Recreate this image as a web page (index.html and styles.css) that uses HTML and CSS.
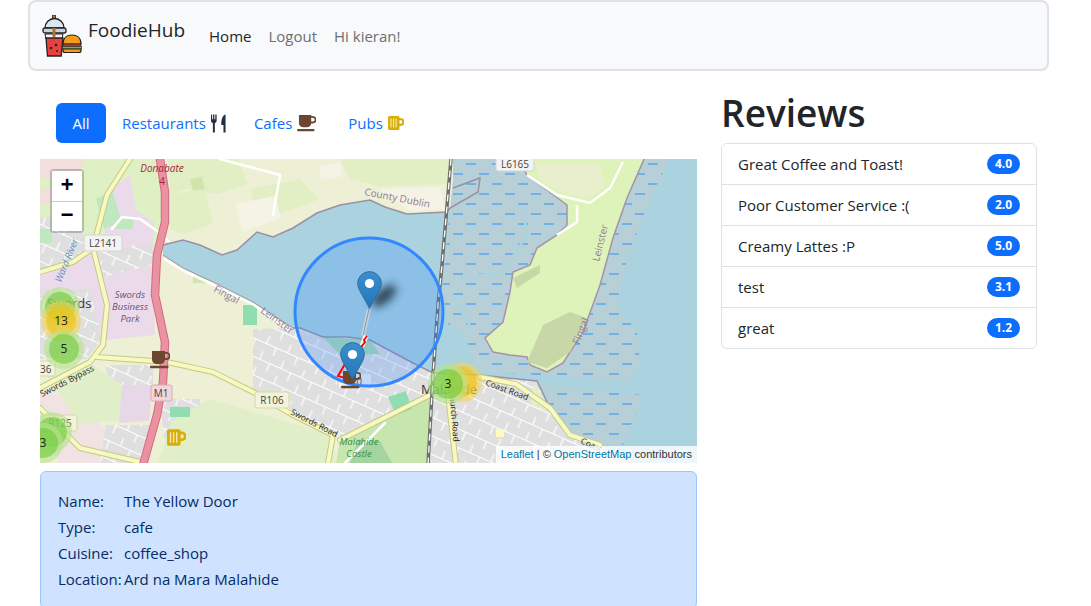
FILE: index.html
```html
<!DOCTYPE html>
<html lang="en">
<head>
    <meta charset="UTF-8">
    <meta name="viewport" content="width=device-width, initial-scale=1.0">
    <title>FoodieHub</title>
    <link rel="stylesheet" href="styles.css">
</head>
<body>
    <!-- shared icons -->
    <svg class="svg-defs" aria-hidden="true">
        <defs>
            <symbol id="icon-coffee" viewBox="0 0 20 18">
                <path fill="#6b4630" fill-rule="evenodd" d="M2 0h13v1h1.5a4 4 0 0 1 0 8H15a5 5 0 0 1-5 4H7a5 5 0 0 1-5-4zM15 2.8V7h1.5a2.1 2.1 0 0 0 0-4.2z"/>
                <rect fill="#6b4630" y="14.8" width="18.5" height="2.4" rx="1"/>
            </symbol>
            <symbol id="icon-beer" viewBox="0 0 16 16">
                <path fill="#d9ae0b" fill-rule="evenodd" d="M1.5 1H10a1.500 1.500 0 0 1 1.500 1.500V3h1a3.500 3.500 0 0 1 0 8h-1v2.500A1.500 1.500 0 0 1 10 15H1.500A1.500 1.500 0 0 1 0 13.500V2.500A1.500 1.500 0 0 1 1.500 1zM11.500 5.200v3.600h1a1.800 1.800 0 0 0 0-3.600z"/>
                <path fill="#f7ecb8" d="M2.400 3.500h1.100v9H2.400zM5 3.500h1.100v9H5zM7.600 3.500h1.100v9H7.600z"/>
            </symbol>
            <linearGradient id="pin-fill" x1="0" y1="0" x2="0" y2="1">
                <stop offset="0" stop-color="#3a8fd0"/>
                <stop offset="1" stop-color="#2477b8"/>
            </linearGradient>
            <symbol id="icon-pin" viewBox="0 0 25 38">
                <path fill="url(#pin-fill)" stroke="#2e6c97" d="M12.500.7C6 .7.700 6 .700 12.500c0 6 7.300 15.500 11.800 24.800C17 28 24.300 18.500 24.300 12.500 24.300 6 19 .700 12.500.700z"/>
                <circle cx="12.500" cy="12.500" r="4.600" fill="#fff"/>
            </symbol>
            <clipPath id="marsh-clip">
                <path d="M415 0H630L610 39 587 99 577 146 597 173 600 203 590 223 440 212 430 193 425 175 408 165 402 130ZM503 226L603 236 583 286 557 283 530 276 510 249Z"/>
            </clipPath>
            <pattern id="streets" width="23" height="17" patternUnits="userSpaceOnUse" patternTransform="rotate(24)">
                <rect width="23" height="17" fill="#e0dfdf"/>
                <path stroke="#fff" stroke-width="1.200" fill="none" d="M0 8.500h23M6 0v8.500M17 8.500V17"/>
            </pattern>
            <filter id="pin-blur" x="-60%" y="-60%" width="220%" height="220%"><feGaussianBlur stdDeviation="4"/></filter>
        </defs>
    </svg>

    <nav class="navbar">
        <a class="brand" href="#">
            <svg class="brand-logo" viewBox="0 0 40 42" aria-hidden="true">
                <rect x="10.500" y="0" width="3" height="11" fill="#a8742f" stroke="#222" stroke-width=".8"/>
                <path d="M3 19h18l-1 5H4z" fill="#f4f6f8" stroke="#222"/>
                <path d="M4 23h17l-1.800 18H5.500z" fill="#e8403e" stroke="#222" stroke-width="1.300"/>
                <path d="M3 13a9.500 9.500 0 0 1 19 0z" fill="#dbe6ef" stroke="#222" stroke-width="1.300"/>
                <rect x="1" y="13" width="23" height="5" rx="2" fill="#c6d4e0" stroke="#222" stroke-width="1.300"/>
                <rect x="10.500" y="13" width="3" height="9" fill="#a8742f"/>
                <circle cx="9" cy="33" r="1.300" fill="#222"/>
                <circle cx="14" cy="30" r="1.300" fill="#222"/>
                <circle cx="15" cy="36" r="1" fill="#222"/>
                <path d="M21 29c0-6 4-9 9-9s9 3 9 9z" fill="#f39c1e" stroke="#222" stroke-width="1.200"/>
                <rect x="21" y="29" width="18" height="2.500" fill="#b5392c" stroke="#222" stroke-width=".6"/>
                <rect x="20.500" y="31.500" width="19" height="2.500" fill="#7cb342" stroke="#222" stroke-width=".6"/>
                <path d="M21 34h18v1.500a2 2 0 0 1-2 2H23a2 2 0 0 1-2-2z" fill="#f39c1e" stroke="#222" stroke-width="1.200"/>
            </svg>
            <span class="brand-name">FoodieHub</span>
        </a>
        <ul class="nav-links">
            <li><a class="nav-link active" href="#">Home</a></li>
            <li><a class="nav-link" href="#">Logout</a></li>
            <li><span class="nav-link">Hi kieran!</span></li>
        </ul>
    </nav>

    <div class="content">
        <main class="left-col">
            <ul class="pills">
                <li><a class="pill pill-all active" href="#">All</a></li>
                <li>
                    <a class="pill" href="#">Restaurants
                        <svg class="icon-cutlery" viewBox="0 0 16 19" aria-hidden="true">
                            <path fill="#212f42" d="M0 0h1.200v5h1V0h1.400v5h1V0H6v6.500c0 1.300-.8 2.200-1.900 2.400V19H2V8.900C.8 8.700 0 7.800 0 6.500zM11 9.500C11 4 13 .5 15.500 0v19h-2.200v-8H11z"/>
                        </svg>
                    </a>
                </li>
                <li><a class="pill" href="#">Cafes <svg class="icon-coffee" aria-hidden="true"><use href="#icon-coffee"/></svg></a></li>
                <li><a class="pill" href="#">Pubs <svg class="icon-beer" aria-hidden="true"><use href="#icon-beer"/></svg></a></li>
            </ul>

            <div class="map">
                <svg class="map-canvas" viewBox="0 0 657 304" role="img" aria-label="Map of Malahide estuary">
                    <!-- land -->
                    <rect width="657" height="304" fill="#eef0d6"/>
                    <path fill="#e2efc4" d="M128 0H198L208 25 178 35 148 30 130 35ZM130 35L165 30 173 65 143 75 130 70ZM210 30L260 20 280 40 220 62ZM300 0H410V25L340 28 310 20Z"/>
                    <path fill="#f5f2e6" d="M195 45L235 37 241 59 203 73ZM340 30L400 28 405 50 370 52ZM280 8L300 3 303 17 281 21Z"/>
                    <path fill="#cfe5ad" d="M150 20L162 18 165 30 153 32ZM92 25L102 15 105 43 93 48ZM153 116L167 116 167 124 153 124Z"/>

                    <!-- west of the motorway -->
                    <path fill="#dff0c5" d="M0 0H118L123 63 113 96 60 96 0 90Z"/>
                    <path fill="#f3dede" d="M0 0H45L37 22 0 19ZM0 30H16V44H0Z"/>
                    <path fill="#ebdbea" d="M70 30L90 16 96 51 114 63 112 95 62 99ZM0 104L48 90 112 98 115 176 65 181 51 151H0Z"/>
                    <path fill="#e7d8e8" d="M77 226H113L109 262 79 264Z"/>
                    <path fill="url(#streets)" d="M0 58H40L48 98 18 108 0 112ZM58 92L113 84V106L63 118ZM0 130H50L62 180 47 200H0ZM65 206H113V226H70Z"/>
                    <path fill="#bfe8c0" d="M56 40L72 32 82 62 64 70ZM0 70H12V84H0ZM75 60H93V70H75Z"/>
                    <path fill="#f1e3e3" d="M0 235H40L60 265 100 304H20L0 275Z"/>
                    <path fill="url(#streets)" d="M66 266H110L104 304H60ZM120 240H160L162 270 124 280Z"/>
                    <path fill="#e0efc8" d="M0 206H52L82 226 79 262 39 264ZM132 262L170 240 293 276 296 304H118Z"/>
                    <path fill="#8fddb0" d="M203 146L217 146 217 166 203 166ZM130 248H150V258H130Z"/>

                    <!-- south shore, housing -->
                    <path fill="url(#streets)" d="M213 170L253 169 283 178 330 181 373 204 393 214 390 238 335 262 300 280 293 276 253 256 213 233Z"/>
                    <path fill="#c6e6ad" d="M296 304L300 280 335 262 390 238 388 304Z"/>
                    <path fill="#a6d4a0" d="M310 304L318 280 340 282 352 304Z"/>
                    <path fill="#a9dcb0" d="M283 178L330 181 340 195 300 196Z"/>
                    <path fill="#8fddb0" d="M348 238L366 232 372 250 356 256Z"/>

                    <!-- water -->
                    <path fill="#aad3df" d="M123 86L143 81 160 86 182 96 197 91 217 73 233 78 253 69 277 54 300 46 330 41 345 48 367 55 407 53 410 49 438 33 440 19 413 29 413 0H657V304H587L557 283 530 276 510 249 497 222 440 216 393 214 373 204 330 181 307 178 283 178 260 169 253 169 213 143 173 123 143 109 123 96Z"/>

                    <!-- marsh -->
                    <g clip-path="url(#marsh-clip)">
                        <rect x="400" width="240" height="304" fill="#b7cfd6"/>
                        <path class="marsh-dash" d="M400 5H640M400 25H640M400 45H640M400 65H640M400 85H640M400 105H640M400 125H640M400 145H640M400 165H640M400 185H640M400 205H640M400 225H640M400 245H640M400 265H640M400 285H640"/>
                        <path class="marsh-dash marsh-dash-alt" d="M400 15H640M400 35H640M400 55H640M400 75H640M400 95H640M400 115H640M400 135H640M400 155H640M400 175H640M400 195H640M400 215H640M400 235H640M400 255H640M400 275H640"/>
                    </g>
                    <path fill="none" stroke="#aad3df" stroke-width="3" d="M483 49L487 76 463 113 420 119"/>
                    <path fill="none" stroke="#aad3df" stroke-width="3" d="M412 135C418 150 428 160 432 172"/>

                    <!-- the spit -->
                    <path fill="#def3b9" stroke="#a593aa" stroke-width="1.500" d="M478 -2L487 16 527 46V66L517 76 497 89 490 106 473 113 470 133 463 163 445 179 453 193 470 196 487 198 490 206 507 213 523 204 543 173 560 126 573 79 587 39 605 -2Z"/>
                    <path fill="#e9efcd" d="M495 5H560L565 28 548 40 518 32 500 20Z"/>
                    <path fill="#c8d7a8" d="M473 119L500 106V114L477 129ZM530 153L547 159 530 193 507 209 487 203 503 166Z"/>
                    <path fill="none" stroke="#fff" stroke-width="2.500" d="M487 16L517 36 550 44 570 29 583 3M537 46V63L517 76"/>

                    <!-- land south of the channel -->
                    <path fill="url(#streets)" d="M393 216L440 216 497 222 510 249 530 276 557 283 587 304H388Z"/>
                    <path fill="#dff0c5" d="M495 224L509 252 491 246Z"/>
                    <path fill="#fdfcb9" d="M456 270H464V278H456Z"/>

                    <!-- shoreline -->
                    <path fill="none" stroke="#9a8fa6" stroke-width="1.500" d="M123 86L143 81 160 86 182 96 197 91 217 73 233 78 253 69 277 54 300 46 330 41 345 48 367 55 407 53 410 49 438 33 440 19 413 29"/>
                    <path fill="none" stroke="#9a8fa6" stroke-width="1.500" d="M253 169L260 169 283 178 307 178 330 181 373 204 393 214 440 216 497 222 510 249 530 276 557 283"/>
                    <path fill="none" stroke="#9a8fa6" d="M123 96L143 109 173 123 213 143 253 169"/>
                    <path fill="none" stroke="#fff" stroke-width="2.500" d="M124 100L144 112 174 126 214 146 250 172"/>

                    <!-- roads -->
                    <g fill="none" stroke-linecap="round">
                        <path stroke="#fff" stroke-width="2.500" d="M128 82L120 74 100 60 82 58 72 70M180 0L240 16 233 56M305 304L345 264"/>
                        <path stroke="#c7c78d" stroke-width="6" d="M90 0L67 36 53 89 67 146 63 186 50 203 0 229M0 113L33 103 53 89M0 249L40 289 100 303M57 198L127 203 173 213 213 233 253 256 293 276 288 304M300 281L390 236M440 218L476 225 510 249 530 276 560 286M408 236L416 306"/>
                        <path stroke="#f7fabf" stroke-width="4" d="M90 0L67 36 53 89 67 146 63 186 50 203 0 229M0 113L33 103 53 89M0 249L40 289 100 303M57 198L127 203 173 213 213 233 253 256 293 276 288 304M300 281L390 236M440 218L476 225 510 249 530 276 560 286M408 236L416 306"/>
                        <path stroke="#d56a7f" stroke-width="8.500" d="M120 0L125 33V63L117 96 115 136 125 183 123 223 117 256 103 306"/>
                        <path stroke="#e892a2" stroke-width="6.500" d="M120 0L125 33V63L117 96 115 136 125 183 123 223 117 256 103 306"/>
                        <path stroke="#6e6e6e" stroke-width="3.500" d="M411 0L402 106 398 146 393 216 388 306"/>
                        <path stroke="#fff" stroke-width="1.300" stroke-dasharray="6 6" d="M411 0L402 106 398 146 393 216 388 306"/>
                    </g>

                    <!-- map labels -->
                    <text class="lbl-place" x="122" y="13" text-anchor="middle">Donabate</text>
                    <text class="lbl-red" x="122" y="26" text-anchor="middle">4</text>
                    <text class="lbl-area" x="90" y="139" text-anchor="middle">Swords</text>
                    <text class="lbl-area" x="90" y="151" text-anchor="middle">Business</text>
                    <text class="lbl-area" x="90" y="163" text-anchor="middle">Park</text>
                    <text class="lbl-town" x="7" y="149">Swords</text>
                    <text class="lbl-water" transform="translate(21 124) rotate(-68)">Ward River</text>
                    <text class="lbl-border" transform="translate(173 132) rotate(29)">Fingal</text>
                    <text class="lbl-border" transform="translate(220 153) rotate(36)">Leinster</text>
                    <text class="lbl-border" transform="translate(324 36) rotate(11)">County Dublin</text>
                    <text class="lbl-border" transform="translate(559 103) rotate(-76)">Leinster</text>
                    <text class="lbl-border" transform="translate(539 186) rotate(-69)">Fingal</text>
                    <text class="lbl-road" transform="translate(2 238) rotate(-27)">Swords Bypass</text>
                    <text class="lbl-road" transform="translate(250 255) rotate(27)">Swords Road</text>
                    <text class="lbl-road" transform="translate(445 226) rotate(20)">Coast Road</text>
                    <text class="lbl-road" transform="translate(409 232) rotate(85)">Church Road</text>
                    <text class="lbl-road" transform="translate(540 284) rotate(24)">Coast</text>
                    <text class="lbl-green" x="319" y="286" text-anchor="middle">Malahide</text>
                    <text class="lbl-green" x="319" y="298" text-anchor="middle">Castle</text>
                    <text class="lbl-town" x="381" y="235">Malahide</text>

                    <!-- road shields -->
                    <g class="shield">
                        <rect x="44" y="76" width="38" height="16" rx="2"/>
                        <text x="63" y="88" text-anchor="middle">L2141</text>
                        <rect x="456" y="-4" width="38" height="16" rx="2"/>
                        <text x="475" y="9" text-anchor="middle">L6165</text>
                        <rect x="215" y="233" width="34" height="16" rx="2" class="shield-yellow"/>
                        <text x="232" y="245" text-anchor="middle">R106</text>
                        <rect x="-8" y="202" width="23" height="15" rx="2" class="shield-yellow"/>
                        <text x="0" y="214">36</text>
                        <rect x="4" y="256" width="33" height="16" rx="2" class="shield-yellow"/>
                        <text x="20" y="268" text-anchor="middle">R125</text>
                        <rect x="111" y="226" width="21" height="16" rx="2" class="shield-pink"/>
                        <text x="121" y="238" text-anchor="middle">M1</text>
                        <rect x="298" y="214" width="34" height="15" rx="2"/>
                        <text x="316" y="226" text-anchor="middle">R0</text>
                    </g>

                    <!-- search radius -->
                    <circle cx="329" cy="153" r="74" fill="#3388ff" fill-opacity=".25" stroke="#3388ff" stroke-width="3"/>

                    <!-- route -->
                    <path fill="none" stroke="#cdd6dc" stroke-opacity=".85" stroke-width="4" d="M329 150L323 177"/>
                    <path fill="none" stroke="#8d9aa5" d="M329 150L323 177"/>
                    <path fill="none" stroke="#fff" stroke-width="5" d="M326 177L322 187"/>
                    <path fill="none" stroke="#f00" stroke-width="2" d="M327 177L324 181 325 183 321 188M305 205L298 217 312 221"/>

                    <!-- clusters -->
                    <circle class="cl-green-o" cx="20" cy="148" r="20"/>
                    <circle class="cl-green-i" cx="20" cy="148" r="15"/>
                    <circle class="cl-yellow-o" cx="21" cy="162" r="20"/>
                    <circle class="cl-yellow-i" cx="21" cy="162" r="15"/>
                    <text class="cl-text" x="21" y="166" text-anchor="middle">13</text>
                    <circle class="cl-green-o" cx="24" cy="190" r="20"/>
                    <circle class="cl-green-i" cx="24" cy="190" r="15"/>
                    <text class="cl-text" x="24" y="194" text-anchor="middle">5</text>
                    <circle class="cl-green-o" cx="12" cy="273" r="20"/>
                    <circle class="cl-green-i" cx="12" cy="273" r="15"/>
                    <circle class="cl-green-o" cx="3" cy="284" r="20"/>
                    <circle class="cl-green-i" cx="3" cy="284" r="15"/>
                    <text class="cl-text" x="3" y="288" text-anchor="middle">3</text>
                    <circle class="cl-yellow-o" cx="422" cy="223" r="20"/>
                    <circle class="cl-yellow-i" cx="422" cy="223" r="15"/>
                    <circle class="cl-green-o" cx="408" cy="225" r="20"/>
                    <circle class="cl-green-i" cx="408" cy="225" r="15"/>
                    <text class="cl-text" x="408" y="229" text-anchor="middle">3</text>

                    <!-- place icons -->
                    <use href="#icon-coffee" x="110" y="192" width="20" height="18"/>
                    <use href="#icon-beer" x="127" y="269" width="19" height="19"/>

                    <!-- markers -->
                    <ellipse cx="344" cy="137" rx="15" ry="7" fill="#1a2a3a" fill-opacity=".8" filter="url(#pin-blur)" transform="rotate(-40 344 137)"/>
                    <use href="#icon-coffee" x="301" y="212" width="20" height="18"/>
                    <use href="#icon-pin" x="317" y="112" width="25" height="38"/>
                    <use href="#icon-pin" x="300" y="183" width="25" height="38"/>
                </svg>

                <div class="zoom-control">
                    <button class="zoom-btn" type="button">+</button>
                    <button class="zoom-btn" type="button">&minus;</button>
                </div>
                <div class="attribution"><a href="#">Leaflet</a> | &copy; <a href="#">OpenStreetMap</a> contributors</div>
            </div>

            <div class="details">
                <span>Name:</span><span>The Yellow Door</span>
                <span>Type:</span><span>cafe</span>
                <span>Cuisine:</span><span>coffee_shop</span>
                <span>Location:</span><span>Ard na Mara Malahide</span>
            </div>
        </main>

        <aside class="right-col">
            <h1>Reviews</h1>
            <ul class="review-list">
                <li class="review-item">Great Coffee and Toast! <span class="badge">4.0</span></li>
                <li class="review-item">Poor Customer Service :( <span class="badge">2.0</span></li>
                <li class="review-item">Creamy Lattes :P <span class="badge">5.0</span></li>
                <li class="review-item">test <span class="badge">3.1</span></li>
                <li class="review-item">great <span class="badge">1.2</span></li>
            </ul>
        </aside>
    </div>
</body>
</html>
```

FILE: styles.css
```css
* {
    margin: 0;
    padding: 0;
    box-sizing: border-box;
}

html,
body {
    height: 100vh;
    overflow: hidden;
}

body {
    background-color: #fff;
    color: #212529;
    font-family: "Open Sans", "Noto Sans", sans-serif;
    font-size: 15px;
}

ul {
    list-style: none;
}

a {
    text-decoration: none;
}

.svg-defs {
    position: absolute;
    width: 0;
    height: 0;
}

/* navbar */
.navbar {
    display: flex;
    align-items: center;
    height: 71px;
    margin: 0 42px 0 28px;
    padding: 0 12px;
    background-color: #f8f9fa;
    border: 2px solid #dee2e6;
    border-radius: 8px;
}

.brand {
    display: flex;
    align-items: flex-start;
    color: #212529;
    font-size: 19px;
    margin-right: 24px;
}

.brand-logo {
    width: 40px;
    height: 42px;
    margin-right: 6px;
}

.brand-name {
    line-height: 30px;
}

.nav-links {
    display: flex;
    gap: 17px;
    padding-top: 1px;
}

.nav-link {
    color: #6c6f73;
}

.nav-link.active {
    color: #212529;
}

/* page columns */
.content {
    display: flex;
    gap: 24px;
    padding: 19px 54px 0 40px;
}

.left-col {
    width: 657px;
    padding-top: 13px;
}

.right-col {
    width: 316px;
}

.right-col h1 {
    font-size: 37px;
    font-weight: 600;
    line-height: 46px;
    margin-bottom: 7px;
    color: #212529;
}

/* category pills */
.pills {
    display: flex;
    align-items: center;
    margin-left: 16px;
    margin-bottom: 16px;
}

.pill {
    display: flex;
    align-items: center;
    gap: 5px;
    height: 40px;
    padding: 0 16px;
    color: #0d6efd;
    border-radius: 6px;
}

.pill-all {
    justify-content: center;
    width: 50px;
    padding: 0;
}

.pill.active {
    background-color: #0d6efd;
    color: #fff;
}

.icon-cutlery {
    width: 15px;
    height: 19px;
    margin-right: -4px;
}

.icon-coffee {
    width: 19px;
    height: 17px;
}

.icon-beer {
    width: 16px;
    height: 16px;
}

/* map */
.map {
    position: relative;
    height: 304px;
    overflow: hidden;
    margin-bottom: 8px;
}

.map-canvas {
    display: block;
    width: 657px;
    height: 304px;
}

.marsh-dash {
    fill: none;
    stroke: #2f92fa;
    stroke-width: 1.2px;
    stroke-dasharray: 10 16;
}

.marsh-dash-alt {
    stroke-dashoffset: 13;
}

.zoom-control {
    position: absolute;
    top: 10px;
    left: 10px;
    display: flex;
    flex-direction: column;
    border: 2px solid rgba(0, 0, 0, 0.2);
    border-radius: 4px;
    background-clip: padding-box;
}

.zoom-btn {
    width: 30px;
    height: 30px;
    border: none;
    background-color: #fff;
    color: #000;
    font: bold 22px "Liberation Mono", monospace;
}

.zoom-btn + .zoom-btn {
    border-top: 1px solid #ccc;
}

.attribution {
    position: absolute;
    right: 0;
    bottom: 0;
    height: 17px;
    padding: 0 5px;
    background-color: rgba(255, 255, 255, 0.8);
    color: #333;
    font: 11px/17px "Liberation Sans", sans-serif;
}

.attribution a {
    color: #0078a8;
}

/* map text */
.map-canvas text {
    font-family: "Open Sans", "Noto Sans", sans-serif;
}

.lbl-place {
    fill: #a8243c;
    font-size: 10px;
    font-style: italic;
}

.lbl-red {
    fill: #a8243c;
    font-size: 10px;
}

.lbl-area {
    fill: #6f4f78;
    font-size: 9.500px;
    font-style: italic;
}

.lbl-town {
    fill: #333;
    font-size: 13px;
}

.lbl-water {
    fill: #5b8fc4;
    font-size: 9.500px;
    font-style: italic;
}

.lbl-border {
    fill: #8e7a96;
    font-size: 10px;
}

.lbl-road {
    fill: #222;
    font-size: 8.500px;
}

.lbl-green {
    fill: #2f8f4f;
    font-size: 9.500px;
    font-style: italic;
}

.shield rect {
    fill: #f3f3f1;
    stroke: #d4d4d0;
}

.shield .shield-yellow {
    fill: #f2f3d8;
    stroke: #d6d7ae;
}

.shield .shield-pink {
    fill: #f2d4da;
    stroke: #dcaab4;
}

.shield text {
    fill: #444;
    font-size: 10px;
}

.cl-green-o {
    fill: rgba(181, 226, 140, 0.6);
}

.cl-green-i {
    fill: rgba(110, 204, 57, 0.6);
}

.cl-yellow-o {
    fill: rgba(241, 211, 87, 0.6);
}

.cl-yellow-i {
    fill: rgba(240, 194, 12, 0.6);
}

.cl-text {
    fill: #222;
    font-size: 12px;
}

/* selected place */
.details {
    display: grid;
    grid-template-columns: 66px 1fr;
    grid-auto-rows: 26px;
    align-items: center;
    padding: 16px 17px;
    background-color: #cfe2ff;
    border: 1px solid #9ec5fe;
    border-radius: 6px;
    color: #052c65;
}

/* reviews */
.review-list {
    border: 1px solid #dee2e6;
    border-radius: 6px;
}

.review-item {
    display: flex;
    justify-content: space-between;
    align-items: center;
    height: 41px;
    padding: 0 16px;
    border-bottom: 1px solid #dee2e6;
}

.review-item:last-child {
    border-bottom: none;
    height: 40px;
}

.badge {
    width: 33px;
    height: 20px;
    border-radius: 10px;
    background-color: #0d6efd;
    color: #fff;
    font-size: 12px;
    font-weight: 700;
    line-height: 20px;
    text-align: center;
}
```
